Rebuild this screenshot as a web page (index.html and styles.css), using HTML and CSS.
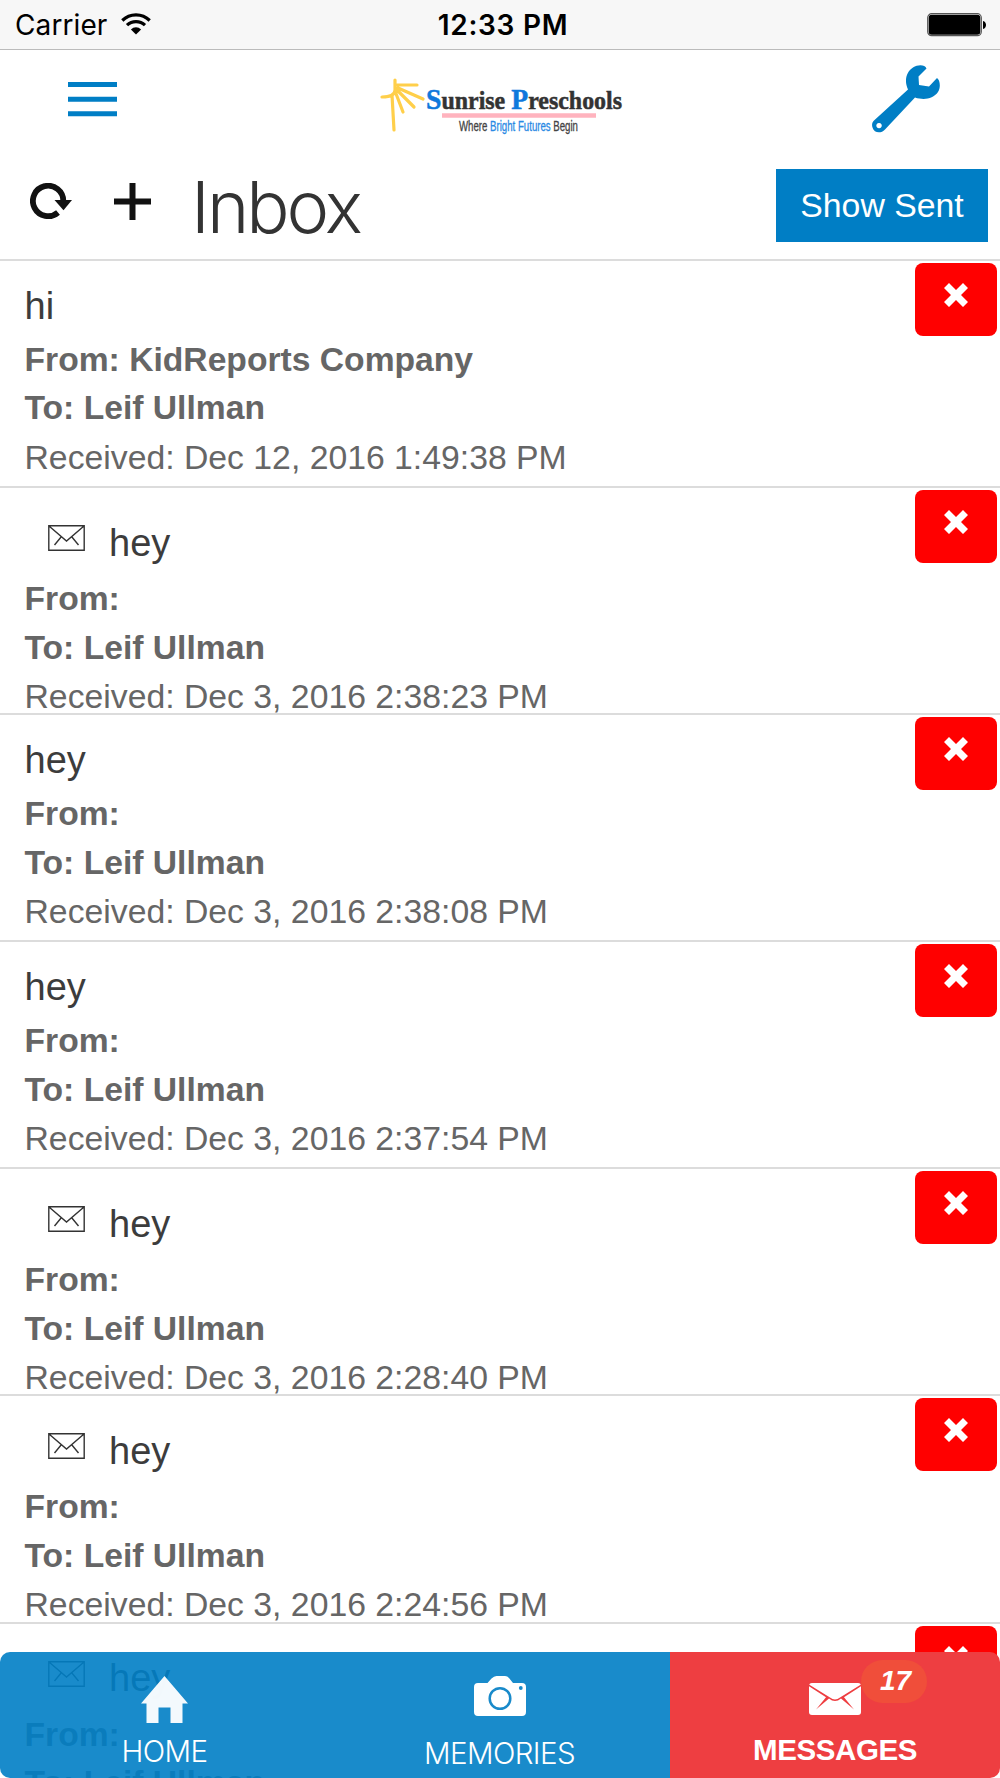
FILE: index.html
```html
<!DOCTYPE html>
<html lang="en">
<head>
<meta charset="utf-8">
<title>Inbox</title>
<link rel="stylesheet" href="styles.css">
</head>
<body>
<svg class="defs" aria-hidden="true">
  <symbol id="mail" viewBox="0 0 37 26"><path d="M.8.8h35.400v24.400H.8zM1 1l17.500 15L36 1M6.500 20l7-8.500M30.500 20l-7-8.500" fill="none" stroke="currentColor" stroke-width="1.400"/></symbol>
  <symbol id="cross" viewBox="0 0 24 24"><path d="M5 0l7 7 7-7 5 5-7 7 7 7-5 5-7-7-7 7-5-5 7-7-7-7z" fill="#fff"/></symbol>
</svg>
<div class="screen">
  <div class="status">
    <div class="status-left">
      <span class="carrier">Carrier</span>
      <svg class="wifi" width="30" height="22" viewBox="0 0 30 22"><path d="M1.300 7.500a19.500 19.500 0 0 1 27.400 0M6 12.200a13 13 0 0 1 18 0" fill="none" stroke="#000" stroke-width="3.200"/><path d="M9.900 16.400a7.400 7.400 0 0 1 10.200 0L15 21.500z"/></svg>
    </div>
    <span class="time">12:33 PM</span>
    <svg class="battery" width="60" height="24" viewBox="0 0 60 24"><rect x=".7" y=".7" width="53.600" height="22" rx="4" fill="#fff" stroke="#555" stroke-width="1.200"/><rect x="1.700" y="1.700" width="51.600" height="20" rx="3"/><path d="M56 8c4 1 4 7 0 8z"/></svg>
  </div>
  <header class="brandbar">
    <svg class="menu" width="49" height="35" viewBox="0 0 49 35"><path d="M0 2.600h49M0 17.300h49M0 31.800h49" stroke="#007ec5" stroke-width="5"/></svg>
    <svg class="logo" width="250" height="66" viewBox="0 0 250 66">
      <g stroke="#ffcf4a" stroke-width="3.200" fill="none" stroke-linecap="round"><path d="M15 2v10c0 5-6 7-13 7M17 7h20M18 10l25 11M17 12l17 17M15 13l8 21M12 17l2 35"/></g>
      <text x="46" y="31" textLength="196" lengthAdjust="spacingAndGlyphs" font-family="Liberation Serif, serif" font-weight="700" font-size="25" fill="#333" stroke="#333" stroke-width=".5"><tspan font-size="29" fill="#0e78dc" stroke="#0e78dc">S</tspan>unrise <tspan font-size="29" fill="#0e78dc" stroke="#0e78dc">P</tspan>reschools</text>
      <path d="M62 37.500h154" stroke="#ffb3be" stroke-width="4.500"/>
      <text x="79" y="52.500" textLength="119" lengthAdjust="spacingAndGlyphs" font-family="Liberation Sans, sans-serif" font-size="14" fill="#444" stroke="#444" stroke-width=".3">Where <tspan fill="#2a8ae4" stroke="#2a8ae4">Bright Futures</tspan> Begin</text>
    </svg>
    <svg class="wrench" width="68" height="68" viewBox="0 0 68 68"><path fill="#007ec5" fill-rule="evenodd" d="M54.500 3.500L46.500 11.500 47 20 57 21.500 65 13C68 15 69 22 66 27 61 34 52 35.500 43 32.500L13 64.500C9 69 2 68 .7 63-.5 60 0 57.500 2 55.500L36 24.500C32 16 34 7 41 2.500 46-.7 53-.5 54.500 3.500zM7 57.900a2.700 2.700 0 1 0 .1 0z"/></svg>
  </header>
  <div class="titlebar">
    <svg class="refresh" width="43" height="37" viewBox="0 0 43 37"><path d="M28 29.500A15.200 15.200 0 1 1 33.300 18" fill="none" stroke="#111" stroke-width="5.800"/><path d="M24.500 17H42L33.500 27.300z" fill="#111"/></svg>
    <svg class="plus" width="37" height="37" viewBox="0 0 37 37"><path d="M18.500 0v37M0 18.500h37" stroke="#111" stroke-width="6"/></svg>
    <h1>Inbox</h1>
    <button class="sent">Show Sent</button>
  </div>
  <main class="list">
    <article class="row"><div class="msg"><h2>hi</h2><b>From: KidReports Company</b><b>To: Leif Ullman</b><p>Received: Dec 12, 2016 1:49:38 PM</p></div><button class="del"><svg width="24" height="24"><use href="#cross"/></svg></button></article>
    <article class="row unread"><div class="msg"><h2><svg class="env" width="37" height="26"><use href="#mail"/></svg>hey</h2><b>From:</b><b>To: Leif Ullman</b><p>Received: Dec 3, 2016 2:38:23 PM</p></div><button class="del"><svg width="24" height="24"><use href="#cross"/></svg></button></article>
    <article class="row"><div class="msg"><h2>hey</h2><b>From:</b><b>To: Leif Ullman</b><p>Received: Dec 3, 2016 2:38:08 PM</p></div><button class="del"><svg width="24" height="24"><use href="#cross"/></svg></button></article>
    <article class="row"><div class="msg"><h2>hey</h2><b>From:</b><b>To: Leif Ullman</b><p>Received: Dec 3, 2016 2:37:54 PM</p></div><button class="del"><svg width="24" height="24"><use href="#cross"/></svg></button></article>
    <article class="row unread"><div class="msg"><h2><svg class="env" width="37" height="26"><use href="#mail"/></svg>hey</h2><b>From:</b><b>To: Leif Ullman</b><p>Received: Dec 3, 2016 2:28:40 PM</p></div><button class="del"><svg width="24" height="24"><use href="#cross"/></svg></button></article>
    <article class="row unread"><div class="msg"><h2><svg class="env" width="37" height="26"><use href="#mail"/></svg>hey</h2><b>From:</b><b>To: Leif Ullman</b><p>Received: Dec 3, 2016 2:24:56 PM</p></div><button class="del"><svg width="24" height="24"><use href="#cross"/></svg></button></article>
    <article class="row unread"><div class="msg"><h2><svg class="env" width="37" height="26"><use href="#mail"/></svg>hey</h2><b>From:</b><b>To: Leif Ullman</b></div><button class="del"><svg width="24" height="24"><use href="#cross"/></svg></button></article>
  </main>
  <nav class="tabs">
    <a class="tab home">
      <svg width="47" height="48" viewBox="0 0 47 48"><path fill="#fff" fill-opacity=".95" d="M23.500 0L47 27.500h-5.500V47H29.500V31.500H17.500V47H5.500V27.500H0z"/></svg>
      <span>HOME</span>
    </a>
    <a class="tab memories">
      <svg width="52" height="40" viewBox="0 0 52 40"><path fill="#fff" d="M4 7h9.500l4-4.500Q20 0 22.500 0h8.500q2.500 0 4 2l4 5H48q4 0 4 4v25q0 4-4 4H4q-4 0-4-4V11q0-4 4-4z"/><circle cx="26" cy="22.500" r="10.300" fill="none" stroke="#198aca" stroke-width="2.500"/><circle cx="46.800" cy="12" r="1.900" fill="#198aca"/></svg>
      <span>MEMORIES</span>
    </a>
    <a class="tab messages">
      <svg width="52" height="32" viewBox="0 0 52 32"><rect width="52" height="32" rx="3" fill="#fff"/><path d="M0 1.600L21 14.500q5 4 10 0L52 1.600v1.700L35 14.200 45 26.500 32 15.500q-6 5-12 0L7 26.500 17 14.200 0 3.300z" fill="#ee3e41"/></svg>
      <span>MESSAGES</span>
      <em class="badge">17</em>
    </a>
  </nav>
</div>
</body>
</html>
```

FILE: styles.css
```css
* { box-sizing: border-box; margin: 0; padding: 0; }
body { background: #fff; font-family: "Liberation Sans", Arial, sans-serif; }
svg { display: block; flex: none; }
button { border: 0; font: inherit; }
.defs { width: 0; height: 0; position: absolute; }
.screen { position: relative; width: 1000px; height: 1778px; overflow: hidden; }

.status {
  height: 49.500px; padding: 1px 13px 0 15px;
  display: grid; grid-template-columns: 1fr auto 1fr; align-items: center;
  background: #f7f7f7; border-bottom: 1.500px solid #bbb;
  font-family: Inter, sans-serif; color: #000;
}
.status-left { display: flex; align-items: center; gap: 14px; }
.carrier { font-size: 28px; letter-spacing: .1px; padding-top: 1px; }
.wifi { margin-bottom: 1px; }
.time { font-size: 28px; font-weight: 600; letter-spacing: .7px; padding: 1px 0 0 4px; }
.battery { justify-self: end; margin-top: 1px; }

.brandbar { height: 107.500px; display: flex; align-items: flex-start; padding: 15.500px 60px 0 68px; }
.menu { margin-top: 17px; }
.logo { margin: 13px 0 0 263px; }
.wrench { margin-left: auto; }

.titlebar { height: 102px; display: flex; align-items: flex-start; padding: 12px 12px 0 30px; }
.refresh { margin-top: 14px; }
.plus { margin: 14px 0 0 41px; }
h1 {
  margin: -2px auto 0 40px; color: #333;
  font: 300 72px/80px Inter, sans-serif; letter-spacing: -3px;
}
.sent { width: 212px; height: 72.500px; background: #007ec5; color: #fff; font-size: 33.800px; }

.row {
  height: 227.100px; border-top: 2px solid #dcdcdc;
  display: flex; justify-content: space-between; padding: 0 3px 0 24.500px;
}
.msg { padding-top: 21px; }
h2 { display: flex; height: 54px; font-size: 38px; line-height: 48px; font-weight: 400; color: #3c3c3c; }
.msg b, .msg p { display: block; font-size: 33.750px; line-height: 48.400px; color: #666; white-space: nowrap; }
.msg b { font-size: 33.650px; }
.unread .msg { padding-top: 30.500px; }
.unread h2 { height: 56.500px; }
.env { margin: 6.500px 24px 0 23.500px; color: #333; }
.del {
  width: 82px; height: 72.500px; margin-top: 2px; padding-top: 20px; border-radius: 8px; background: #f00;
  display: flex; justify-content: center; align-items: flex-start;
}

.tabs {
  position: absolute; left: 0; right: 0; bottom: 0; height: 126px;
  display: grid; grid-template-columns: 329px 341px 330px;
  border-radius: 10px; overflow: hidden;
}
.tab { position: relative; display: flex; flex-direction: column; align-items: center; background: rgba(0, 126, 197, .9); color: #fff; }
.tab span { font: 300 29.500px/36px Inter, sans-serif; letter-spacing: -.6px; margin-top: 9px; }
.home { padding-top: 23.500px; }
.memories { padding-top: 24px; }
.memories span { margin-top: 19px; }
.messages { background: #ee3e41; padding-top: 31px; }
.messages span { font: 700 29.500px/36px "Liberation Sans", Arial, sans-serif; letter-spacing: -.4px; margin-top: 17px; }
.badge {
  position: absolute; left: 191px; top: 8px; width: 66px; height: 43px; padding-left: 3px;
  border-radius: 22px; background: #f04e3a; text-align: center; font: italic 700 28px/42px "Liberation Sans", Arial, sans-serif;
}
```
